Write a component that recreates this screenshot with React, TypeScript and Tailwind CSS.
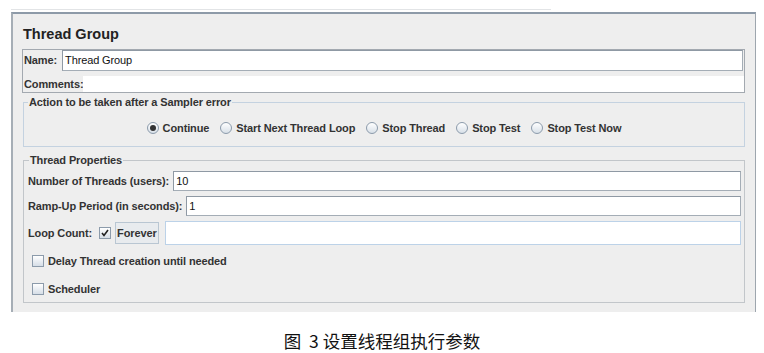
function Radio({ checked, label }: { checked?: boolean; label: string }) {
  return (
    <div className="flex items-center gap-[4px]">
      <div className="flex h-[12px] w-[12px] items-center justify-center rounded-full border border-[#8c9bab] bg-gradient-to-b from-white to-[#d8e0e8]">
        {checked && <div className="h-[6px] w-[6px] rounded-full bg-[#333]" />}
      </div>
      <span className="font-bold">{label}</span>
    </div>
  )
}

function Check({ checked }: { checked?: boolean }) {
  return (
    <div className="flex h-[12px] w-[12px] items-center justify-center border border-[#8c9bab] bg-gradient-to-b from-white to-[#d6dee7]">
      {checked && (
        <svg width="8" height="8" viewBox="0 0 8 8">
          <path d="M1 4 L3 6.5 L7 1" fill="none" stroke="#222" strokeWidth="1.6" />
        </svg>
      )}
    </div>
  )
}

function Field({ value, className = "" }: { value?: string; className?: string }) {
  return (
    <div
      className={`flex flex-1 items-center bg-white border border-t-[#8f99a4] border-l-[#8f99a4] border-b-[#a4adb6] border-r-[#a4adb6] pl-[2px] text-[#111] ${className}`}
    >
      {value}
    </div>
  )
}

export default function App() {
  return (
    <div className="h-[353px] w-[764px] bg-white font-['Liberation_Sans',Arial,sans-serif] text-[11px] text-[#333]">
      <div className="h-[12px] pl-[11px] pt-[9px]">
        <div className="h-px w-[540px] bg-[#e2e4e6]" />
      </div>
      <div className="ml-[11px] h-[300px] w-[745px] border-l-2 border-r border-t-2 border-l-[#a6aeb6] border-r-[#9ea6ae] border-t-[#8d9aa8] bg-[#eeeeee] pl-[9px] pr-[10px] tracking-[-0.12px]">
        <div className="mb-[5px] mt-[10px] h-[20px] pl-[1px] text-[14.5px] font-bold leading-[20px] tracking-normal text-[#222]">
          Thread Group
        </div>

        <div className="flex h-[44px] flex-col border border-[#a3a9b0]">
          <div className="flex h-[21px] items-center pl-[1px] pr-[1px]">
            <span className="mr-[5px] font-bold">Name:</span>
            <Field value="Thread Group" className="h-[21px]" />
          </div>
          <div className="mt-[5px] flex h-[16px] items-center pl-[1px]">
            <span className="font-bold">Comments:</span>
            <div className="h-[16px] flex-1 bg-white" />
          </div>
        </div>

        <fieldset className="ml-[1px] mt-[2px] border border-[#c4d2e0] pb-[10px] pt-[11px]">
          <legend className="ml-[4px] px-[1px] font-bold leading-[14px]">
            Action to be taken after a Sampler error
          </legend>
          <div className="flex h-[16px] items-center justify-center gap-[11px]">
            <Radio checked label="Continue" />
            <Radio label="Start Next Thread Loop" />
            <Radio label="Stop Thread" />
            <Radio label="Stop Test" />
            <Radio label="Stop Test Now" />
          </div>
        </fieldset>

        <fieldset className="ml-[1px] mt-[6px] border border-[#c2c6ca] pb-[2px] pl-[3px] pr-[3px] pt-[4px]">
          <legend className="ml-[2px] px-[1px] font-bold leading-[14px]">Thread Properties</legend>
          <div className="flex h-[20px] items-center pl-[1px]">
            <span className="mr-[4px] font-bold">Number of Threads (users):</span>
            <Field value="10" className="h-[20px]" />
          </div>
          <div className="mt-[5px] flex h-[20px] items-center pl-[1px]">
            <span className="mr-[4px] font-bold">Ramp-Up Period (in seconds):</span>
            <Field value="1" className="h-[20px]" />
          </div>
          <div className="mt-[5px] flex h-[24px] items-center pl-[1px]">
            <span className="mr-[7px] font-bold">Loop Count:</span>
            <Check checked />
            <div className="ml-[4px] flex h-[22px] items-center border border-[#b9c6d2] bg-[#e8ebee] px-[1px] font-bold">
              Forever
            </div>
            <div className="ml-[6px] h-[24px] flex-1 border border-[#bcd2e8] bg-white" />
          </div>
          <div className="mt-[5px] flex h-[22px] items-center gap-[4px] pl-[5px]">
            <Check />
            <span className="font-bold">Delay Thread creation until needed</span>
          </div>
          <div className="mt-[6px] flex h-[22px] items-center gap-[4px] pl-[5px]">
            <Check />
            <span className="font-bold">Scheduler</span>
          </div>
        </fieldset>
      </div>

      <div className="mt-[22px] whitespace-pre text-center font-['Noto_Sans_CJK_SC',sans-serif] text-[17.5px] leading-[13px] text-[#111]">
        图  3 设置线程组执行参数
      </div>
    </div>
  )
}
